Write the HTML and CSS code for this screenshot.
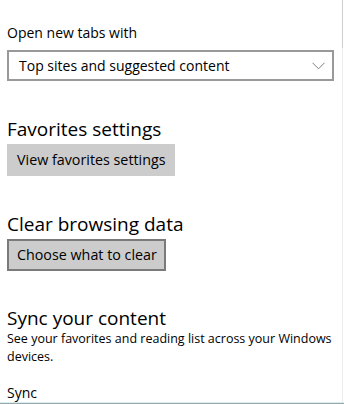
FILE: index.html
```html
<!DOCTYPE html>
<html>
<head>
<meta charset="utf-8">
<link rel="stylesheet" href="styles.css">
</head>
<body>
<div class="pane">
  <div class="label">Open new tabs with</div>
  <div class="select">
    <span>Top sites and suggested content</span>
    <svg class="chev" width="13" height="8" viewBox="0 0 13 8"><path d="M0.5 0.8 L6.5 6.8 L12.5 0.8" fill="none" stroke="#7d7d7d" stroke-width="1"/></svg>
  </div>

  <div class="heading">Favorites settings</div>
  <div class="btn">View favorites settings</div>

  <div class="heading">Clear browsing data</div>
  <div class="btn focused">Choose what to clear</div>

  <div class="heading sync">Sync your content</div>
  <div class="desc">See your favorites and reading list across your Windows devices.</div>
  <div class="label sync-label">Sync</div>
</div>
<div class="scroll"><div class="thumb"></div></div>
<div class="bottom"></div>
</body>
</html>
```

FILE: styles.css
```css
html, body {
  margin: 0;
  padding: 0;
  background: #fff;
  width: 344px;
  height: 404px;
  overflow: hidden;
}
body {
  font-family: "Open Sans", "Noto Sans", sans-serif;
  color: #000;
  position: relative;
}
.pane {
  display: flex;
  flex-direction: column;
  align-items: flex-start;
  padding: 23px 10px 0 7px;
}
.label {
  font-size: 14px;
  line-height: 20px;
}
.select {
  margin-top: 7px;
  box-sizing: border-box;
  width: 327px;
  height: 31px;
  border: 2px solid #999;
  display: flex;
  align-items: center;
  justify-content: space-between;
  padding: 0 7px 0 10px;
  font-size: 14px;
}
.heading {
  font-size: 19px;
  line-height: 26px;
  margin-top: 35px;
}
.btn {
  margin-top: 2px;
  box-sizing: border-box;
  height: 32px;
  background: #ccc;
  border: 2px solid #ccc;
  padding: 0 7px 0 8px;
  font-size: 14.3px;
  line-height: 28px;
}
.btn.focused { border-color: #7a7a7a; }
.heading.sync { margin-top: 34px; }
.desc {
  font-size: 12.5px;
  line-height: 18px;
  width: 334px;
  margin-top: -1px;
}
.sync-label { margin-top: 17px; }
.scroll {
  position: absolute;
  left: 342px;
  top: 0;
  width: 1px;
  height: 404px;
  background: #ececec;
}
.thumb {
  width: 1px;
  height: 48px;
  background: #cfcfcf;
}
.bottom {
  position: absolute;
  left: 0;
  bottom: 0;
  width: 344px;
  height: 1px;
  background: #9ba9ac;
  border-top: 1px solid #d6eef0;
}
```
